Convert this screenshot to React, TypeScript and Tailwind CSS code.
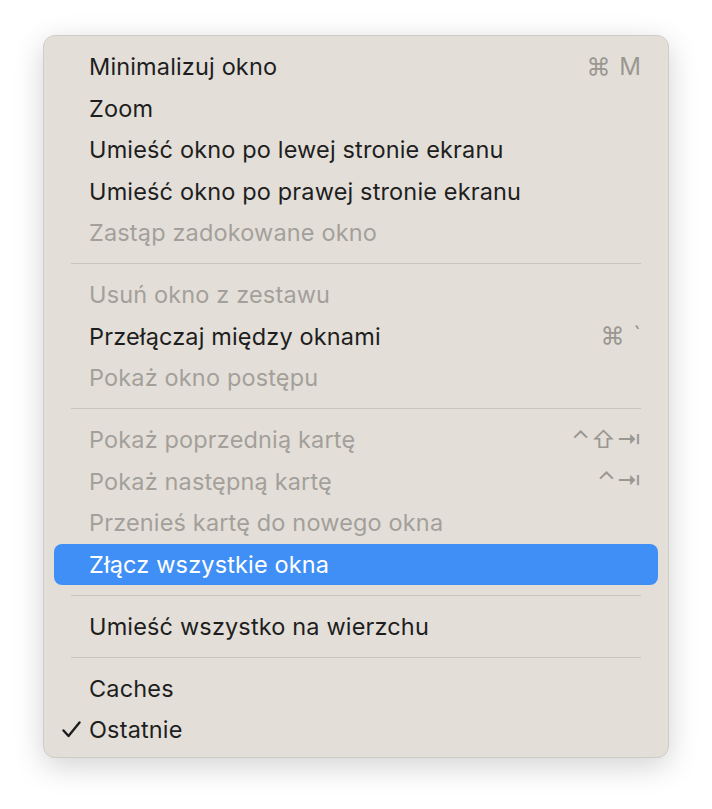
type Item = {
  label: string;
  disabled?: boolean;
  shortcut?: string;
  active?: boolean;
  checked?: boolean;
};

const groups: Item[][] = [
  [
    { label: "Minimalizuj okno", shortcut: "⌘ M" },
    { label: "Zoom" },
    { label: "Umieść okno po lewej stronie ekranu" },
    { label: "Umieść okno po prawej stronie ekranu" },
    { label: "Zastąp zadokowane okno", disabled: true },
  ],
  [
    { label: "Usuń okno z zestawu", disabled: true },
    { label: "Przełączaj między oknami", shortcut: "⌘ `" },
    { label: "Pokaż okno postępu", disabled: true },
  ],
  [
    { label: "Pokaż poprzednią kartę", disabled: true, shortcut: "⌃⇧⇥" },
    { label: "Pokaż następną kartę", disabled: true, shortcut: "⌃⇥" },
    { label: "Przenieś kartę do nowego okna", disabled: true },
    { label: "Złącz wszystkie okna", active: true },
  ],
  [{ label: "Umieść wszystko na wierzchu" }],
  [{ label: "Caches" }, { label: "Ostatnie", checked: true }],
];

function Row({ item }: { item: Item }) {
  const color = item.active
    ? "bg-[#3f8ff7] text-white"
    : item.disabled
      ? "text-[#a3a09b]"
      : "text-[#1e1e1e]";
  return (
    <div className={`mx-[10px] flex h-[41.5px] items-center rounded-[8px] pl-[8px] pr-[16px] ${color}`}>
      <span className="flex w-[27px] items-center">
        {item.checked && (
          <svg width="19" height="17" viewBox="0 0 19 17" fill="none">
            <path d="M1.5 9.5 L6.5 15 L17.5 1.5" stroke="#1e1e1e" strokeWidth="2.4" strokeLinecap="round" strokeLinejoin="round" />
          </svg>
        )}
      </span>
      <span className="flex-1 whitespace-nowrap tracking-[0.15px]">{item.label}</span>
      {item.shortcut && (
        <span className="whitespace-nowrap text-[24px] tracking-[1px] text-[#9a9792]">{item.shortcut}</span>
      )}
    </div>
  );
}

export default function App() {
  return (
    <div className="flex min-h-screen justify-center bg-white pt-[35px] font-['Inter',sans-serif] text-[23.5px]">
      <div className="h-[723px] w-[626px] rounded-[12px] border border-[#cfcbc5] bg-[#e3dfd8] pb-[8px] pt-[10px] shadow-[0_8px_30px_rgba(0,0,0,0.18)]">
        {groups.map((g, gi) => (
          <div key={gi}>
            {gi > 0 && (
              <div className="flex h-[20.5px] items-center px-[27px]">
                <div className="h-px w-full bg-[#c8c4be]" />
              </div>
            )}
            {g.map((it) => (
              <Row key={it.label} item={it} />
            ))}
          </div>
        ))}
      </div>
    </div>
  );
}
